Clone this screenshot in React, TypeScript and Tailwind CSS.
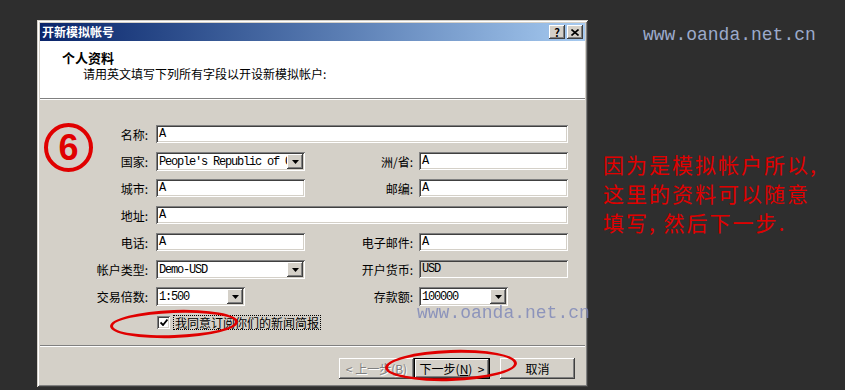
import React from 'react';

const raised =
  'shadow-[inset_-1px_-1px_#404040,inset_1px_1px_#ffffff,inset_-2px_-2px_#808080,inset_2px_2px_#d4d0c8]';
const sunken =
  'shadow-[inset_1px_1px_#808080,inset_-1px_-1px_#ffffff,inset_2px_2px_#404040,inset_-2px_-2px_#d4d0c8]';

const cjk = "font-['Noto_Sans_CJK_SC','Noto_Sans',sans-serif]";
const mono = "font-['Liberation_Mono','Courier_New',monospace]";

const Label: React.FC<{ text: string; pr: string }> = ({ text, pr }) => (
  <div className={`flex items-center justify-end text-[12px] text-black ${pr}`}>{text}</div>
);

const Field: React.FC<{ value: string; span?: string; disabled?: boolean }> = ({ value, span = '', disabled }) => (
  <div className={`h-[18px] flex items-center pl-[3px] ${sunken} ${disabled ? 'bg-[#d4d0c8]' : 'bg-white'} ${span}`}>
    <span className={`block ${mono} text-[12px] tracking-[-1.2px] leading-[12px] text-black`}>{value}</span>
  </div>
);

const Arrow = () => (
  <svg width="7" height="4" viewBox="0 0 7 4">
    <path d="M0 0h7L3.5 4z" fill="#000" />
  </svg>
);

const Select: React.FC<{ value: string; w: string }> = ({ value, w }) => (
  <div className={`h-[19px] flex items-center bg-white p-[2px] ${sunken} ${w}`}>
    <div className="flex-1 overflow-hidden whitespace-nowrap pl-[1px]">
      <span className={`block ${mono} text-[12px] tracking-[-1.2px] leading-[12px] text-black`}>{value}</span>
    </div>
    <div className={`w-[16px] h-[15px] bg-[#d4d0c8] flex items-center justify-center ${raised}`}>
      <Arrow />
    </div>
  </div>
);

const App: React.FC = () => {
  return (
    <div className={`w-[845px] h-[390px] bg-[#2e2e2e] flex overflow-hidden ${cjk}`}>
      {/* dialog */}
      <div className={`relative ml-[37px] mt-[20px] w-[551px] h-[367px] bg-[#d4d0c8] p-[3px] flex flex-col shrink-0 shadow-[inset_1px_1px_#d4d0c8,inset_-1px_-1px_#404040,inset_2px_2px_#ffffff,inset_-2px_-2px_#808080]`}>
        {/* title bar */}
        <div className="h-[18px] bg-linear-to-r from-[#0a246a] to-[#a6caf0] flex items-center justify-between pl-[2px] pr-[2px]">
          <span className="text-white text-[12px] font-bold leading-none">开新模拟帐号</span>
          <div className="flex gap-[2px]">
            <div className={`w-[16px] h-[14px] bg-[#d4d0c8] flex items-center justify-center text-[11px] font-bold leading-none text-black ${raised}`}>?</div>
            <div className={`w-[16px] h-[14px] bg-[#d4d0c8] flex items-center justify-center ${raised}`}>
              <svg width="8" height="7" viewBox="0 0 8 7">
                <path d="M0.5 0.5L7.5 6.5M7.5 0.5L0.5 6.5" stroke="#000" strokeWidth="1.6" />
              </svg>
            </div>
          </div>
        </div>

        {/* header */}
        <div className="h-[58px] bg-white border-b border-[#808080] pl-[22px] pt-[9px]">
          <div className="text-[13px] font-bold leading-[15px] text-black">个人资料</div>
          <div className="pl-[21px] mt-[1px] text-[12px] leading-[15px] text-black">请用英文填写下列所有字段以开设新模拟帐户:</div>
        </div>
        <div className="h-px bg-white" />

        {/* body */}
        <div className="flex-1 pt-[25px] flex flex-col">
          <div className="grid grid-cols-[116px_149px_114px_149px] gap-y-[8px] auto-rows-[19px]">
            <Label text="名称:" pr="pr-[8px]" />
            <Field value="A" span="col-span-3" />

            <Label text="国家:" pr="pr-[8px]" />
            <Select value="People's Republic of China" w="w-[149px]" />
            <Label text="洲/省:" pr="pr-[6px]" />
            <Field value="A" />

            <Label text="城市:" pr="pr-[8px]" />
            <Field value="A" />
            <Label text="邮编:" pr="pr-[6px]" />
            <Field value="A" />

            <Label text="地址:" pr="pr-[8px]" />
            <Field value="A" span="col-span-3" />

            <Label text="电话:" pr="pr-[8px]" />
            <Field value="A" />
            <Label text="电子邮件:" pr="pr-[6px]" />
            <Field value="A" />

            <Label text="帐户类型:" pr="pr-[8px]" />
            <Select value="Demo-USD" w="w-[149px]" />
            <Label text="开户货币:" pr="pr-[6px]" />
            <Field value="USD" disabled />

            <Label text="交易倍数:" pr="pr-[8px]" />
            <Select value="1:500" w="w-[89px]" />
            <Label text="存款额:" pr="pr-[6px]" />
            <Select value="100000" w="w-[89px]" />
          </div>

          {/* checkbox */}
          <div className="flex items-center pl-[117px] mt-[9px] h-[15px]">
            <div className={`w-[13px] h-[13px] bg-white flex items-center justify-center ${sunken}`}>
              <svg width="8" height="7" viewBox="0 0 8 7">
                <path d="M0.5 3.5L3 6L7.5 0.5" stroke="#000" strokeWidth="1.8" fill="none" />
              </svg>
            </div>
            <span className="ml-[3px] px-[1px] border border-dotted border-black text-[12px] leading-[13px] text-black">我同意订阅你们的新闻简报</span>
          </div>

          {/* separator */}
          <div className="mt-[15px] h-px bg-[#808080]" />
          <div className="h-px bg-white" />

          {/* buttons */}
          <div className="flex justify-end items-center pr-[10px] mt-[11px]">
            <div className={`w-[75px] h-[21px] flex items-center justify-center text-[12px] text-[#808080] [text-shadow:1px_1px_#ffffff] bg-[#d4d0c8] ${raised}`}>
              &lt; 上一步(<u>B</u>)
            </div>
            <div className="w-[76px] h-[21px] border border-black">
              <div className={`w-full h-full flex items-center justify-center text-[12px] text-black bg-[#d4d0c8] ${raised}`}>
                下一步(<u>N</u>)&nbsp;&nbsp;&gt;
              </div>
            </div>
            <div className={`ml-[10px] w-[75px] h-[21px] flex items-center justify-center text-[12px] text-black bg-[#d4d0c8] ${raised}`}>
              取消
            </div>
          </div>
        </div>

        {/* annotations */}
        <div className="absolute left-[7px] top-[103px] w-[49px] h-[49px] rounded-full border-[4px] border-[#e00000] flex items-center justify-center">
          <span className="font-['Liberation_Sans',Arial,sans-serif] font-bold text-[36px] leading-none text-[#e00000]">6</span>
        </div>
        <div className="absolute left-[73px] top-[290px] w-[128px] h-[28px] rounded-[50%] border-[3px] border-[#e00000] -rotate-2" />
        <div className="absolute left-[348px] top-[330px] w-[132px] h-[31px] rounded-[50%] border-[3px] border-[#e00000] -rotate-2" />
        <div className={`absolute left-[380px] top-[283px] ${mono} text-[18px] leading-[20px] text-[#7c86b8] opacity-80 whitespace-nowrap`}>
          www.oanda.net.cn
        </div>
      </div>

      {/* right side */}
      <div className="flex flex-col">
        <div className={`pl-[55px] pt-[25px] ${mono} text-[18px] leading-[20px] text-[#9caacb] whitespace-nowrap`}>
          www.oanda.net.cn
        </div>
        <div className="pl-[15px] mt-[105px] text-[21px] leading-[29px] tracking-[2px] text-[#e00000] whitespace-nowrap">
          <div>因为是模拟帐户所以,</div>
          <div>这里的资料可以随意</div>
          <div>填写, 然后下一步.</div>
        </div>
      </div>
    </div>
  );
};

export default App;
